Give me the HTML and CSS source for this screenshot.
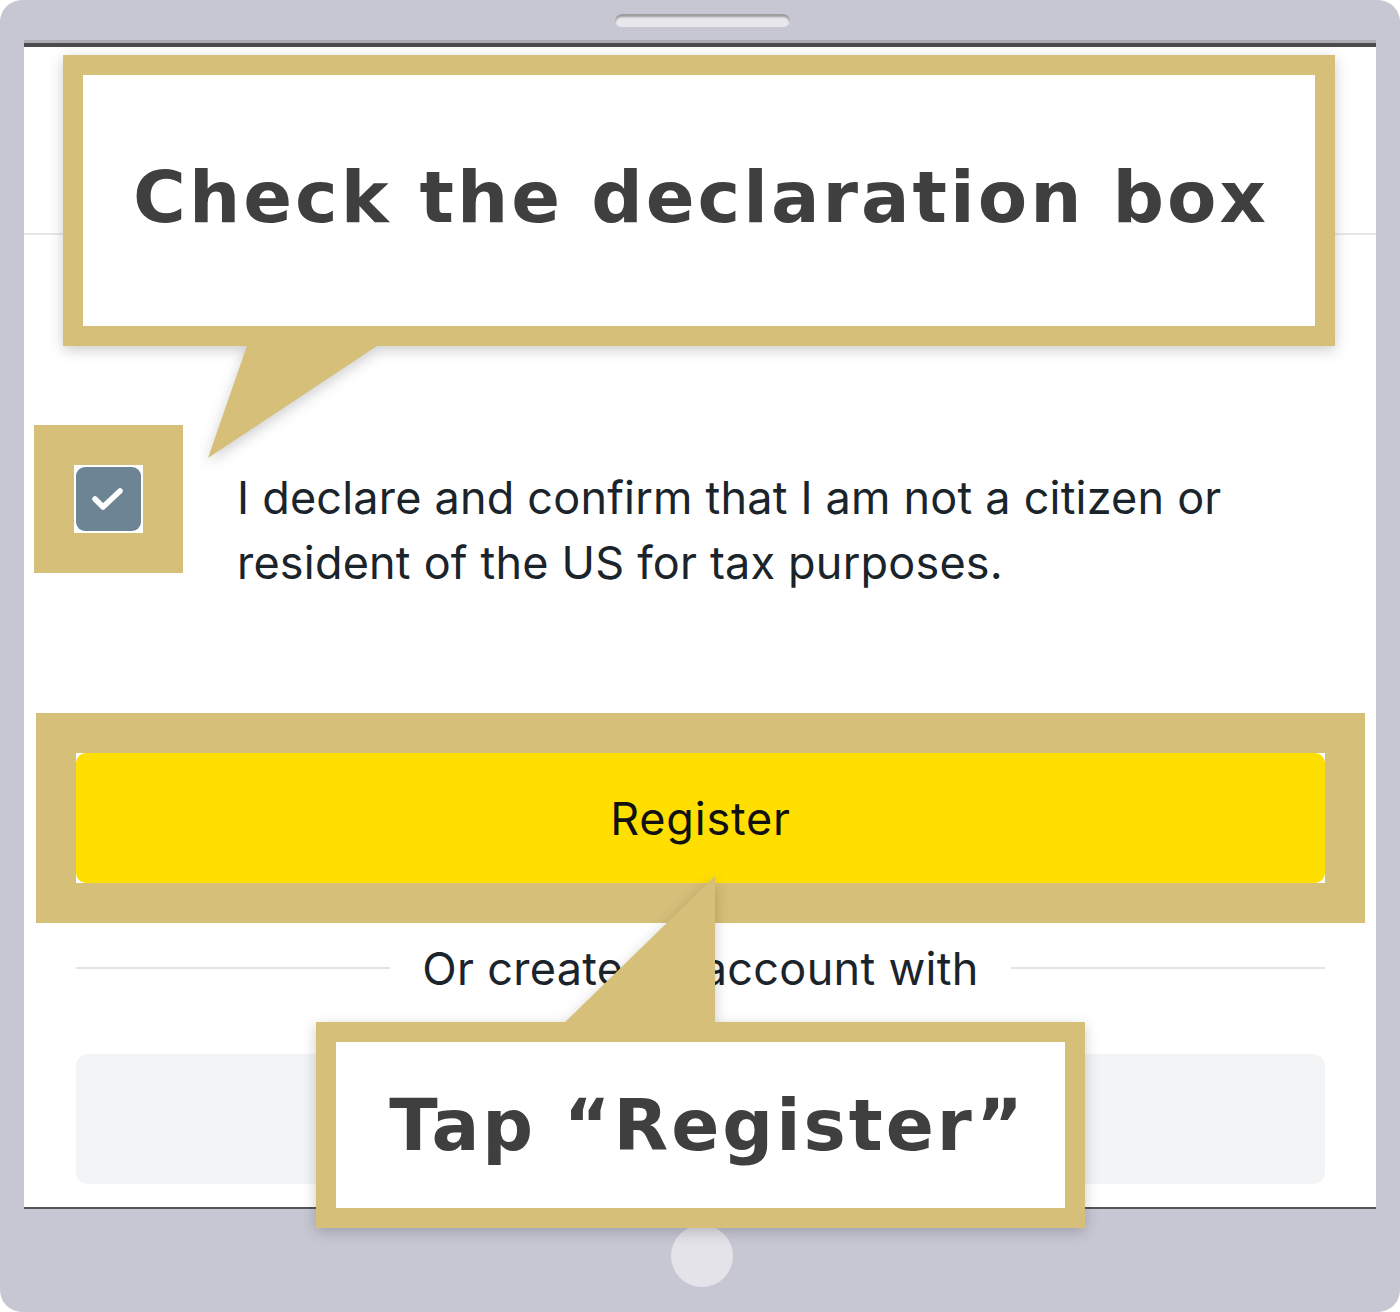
FILE: index.html
```html
<!DOCTYPE html>
<html lang="en">
<head>
    <meta charset="UTF-8">
    <meta name="viewport" content="width=device-width, initial-scale=1.0">
    <title>Register - Declaration</title>
    <link rel="stylesheet" href="styles.css">
</head>
<body>
    <div class="device">
        <div class="device-top"><div class="speaker"></div></div>
        <div class="screen">
            <div class="screen-header"></div>
            <div class="declare-row">
                <div class="checkbox-wrap">
                    <div class="checkbox">
                        <svg width="40" height="40" viewBox="0 0 40 40"><path d="M6 20 L14 28 L31 12" fill="none" stroke="#fff" stroke-width="5.5" stroke-linecap="round" stroke-linejoin="round"/></svg>
                    </div>
                </div>
                <p class="declare-text">I declare and confirm that I am not a citizen or<br>resident of the US for tax purposes.</p>
            </div>
            <div class="register-wrap">
                <button class="register-btn">Register</button>
            </div>
            <div class="divider">
                <span class="divider-line"></span>
                <span class="divider-text">Or create an account with</span>
                <span class="divider-line"></span>
            </div>
            <div class="alt-btn"></div>
        </div>
        <div class="device-bottom"><div class="home-btn"></div></div>

        <!-- callouts -->
        <div class="callout callout-check">
            <div class="callout-box">Check the declaration box</div>
            <svg class="callout-tail" width="190" height="125" viewBox="0 0 190 125"><polygon points="49,0 186,0 8,118" fill="#d6bf79"/></svg>
        </div>
        <div class="callout callout-tap">
            <svg class="callout-tail" width="170" height="160" viewBox="0 0 170 160"><polygon points="2,160 160,160 160,6" fill="#d6bf79"/></svg>
            <div class="callout-box">Tap “Register”</div>
        </div>
    </div>
</body>
</html>
```

FILE: styles.css
```css
body {
    margin: 0;
    background-color: #fff;
    font-family: Inter, "Noto Sans", sans-serif;
}
.device {
    position: relative;
    width: 1400px;
    height: 1312px;
    box-sizing: border-box;
    padding: 0 24px;
    background-color: #c7c7d4;
    border-radius: 22px;
    display: flex;
    flex-direction: column;
}
.device-top {
    height: 40px;
    border-bottom: 3px solid #acacb4;
    display: flex;
    justify-content: center;
}
.speaker {
    margin-top: 14px;
    margin-left: 4px;
    width: 175px;
    height: 13px;
    border-radius: 7px;
    background-color: #e8e8ea;
    box-shadow: inset 0 3px 2px #9c9ca0;
}
.screen {
    height: 1160px;
    background-color: #fff;
    border-top: 4px solid #4b4b4d;
    border-bottom: 2px solid #555;
    padding: 0 51px 0 52px;
    display: flex;
    flex-direction: column;
    overflow: hidden;
}
.screen-header {
    flex-shrink: 0;
    height: 186px;
    margin: 0 -51px 0 -52px;
    border-bottom: 2px solid #e8e8eb;
}
.declare-row {
    display: flex;
    align-items: flex-start;
    margin-top: 230px;
}
.checkbox-wrap {
    margin-left: -2px;
    width: 69px;
    height: 68px;
    box-sizing: border-box;
    padding: 2px;
    background-color: #fff;
    outline: 40px solid #d6bf79;
}
.checkbox {
    width: 65px;
    height: 64px;
    border-radius: 9px;
    background-color: #6d8494;
    display: flex;
    align-items: center;
    justify-content: center;
}
.declare-text {
    margin: 0 0 0 94px;
    font-size: 45px;
    line-height: 65px;
    letter-spacing: 0.2px;
    color: #1b242b;
}
.register-wrap {
    margin-top: 158px;
    height: 130px;
    background-color: #fff;
    outline: 40px solid #d6bf79;
}
.register-btn {
    width: 100%;
    height: 100%;
    border: none;
    border-radius: 10px;
    background-color: #ffdf00;
    font-family: Inter, "Noto Sans", sans-serif;
    font-size: 45px;
    letter-spacing: 0.8px;
    color: #111;
}
.divider {
    margin-top: 59px;
    height: 52px;
    display: flex;
    align-items: center;
}
.divider-line {
    flex: 1;
    height: 2px;
    background-color: #e4e4e6;
}
.divider-text {
    margin: 0 32px;
    font-size: 45px;
    letter-spacing: 0.3px;
    color: #1b242b;
}
.alt-btn {
    margin-top: 60px;
    height: 130px;
    border-radius: 12px;
    background-color: #f3f4f6;
}
.device-bottom {
    flex: 1;
    display: flex;
    justify-content: center;
}
.home-btn {
    margin-top: 16px;
    margin-left: 4px;
    width: 62px;
    height: 62px;
    border-radius: 50%;
    background-color: #e3e3e9;
}

/* callouts */
.callout {
    position: absolute;
    filter: drop-shadow(0 4px 7px rgba(0, 0, 0, .2));
}
.callout-box {
    position: relative;
    box-sizing: border-box;
    border: 20px solid #d6bf79;
    background-color: #fff;
    display: flex;
    align-items: center;
    justify-content: center;
    font-family: "DejaVu Sans", sans-serif;
    font-weight: bold;
    color: #3f3f3f;
    white-space: nowrap;
}
.callout-tail {
    position: absolute;
    display: block;
}
.callout-check {
    left: 63px;
    top: 55px;
}
.callout-check .callout-box {
    width: 1272px;
    height: 291px;
    padding: 0 0 8px 4px;
    font-size: 72px;
    letter-spacing: 3px;
}
.callout-check .callout-tail {
    left: 137px;
    top: 285px;
}
.callout-tap {
    left: 316px;
    top: 1022px;
}
.callout-tap .callout-box {
    width: 769px;
    height: 206px;
    padding-left: 14px;
    font-size: 71px;
    letter-spacing: 3px;
}
.callout-tap .callout-tail {
    left: 239px;
    top: -152px;
}
```
